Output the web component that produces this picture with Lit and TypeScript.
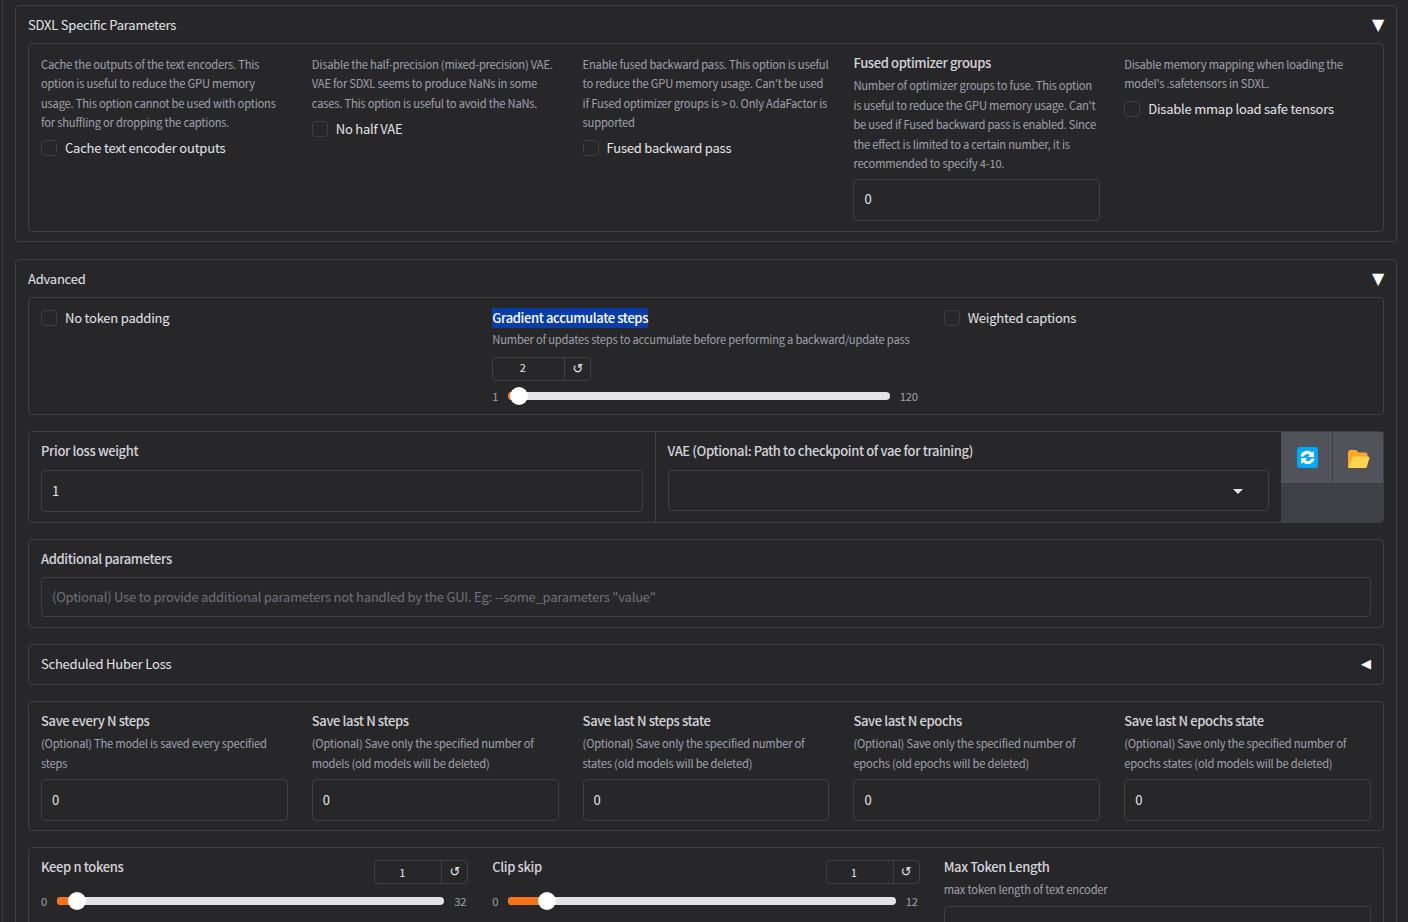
import { LitElement, html, css } from "lit";
import { customElement } from "lit/decorators.js";

const syncArrow = "M3.5 9.5C4 6 7 3.800 10.300 3.800c1.800 0 3.400.7 4.600 1.900L16.800 4v6h-6l2-2c-.6-.7-1.500-1.100-2.500-1.100-1.700 0-3 1-3.500 2.600z";

const syncIcon = html`<svg width="21" height="21" viewBox="0 0 21 21">
  <rect width="21" height="21" rx="3" fill="#03a9f4"></rect>
  <path d=${syncArrow} fill="#fff"></path>
  <path d=${syncArrow} fill="#fff" transform="rotate(180 10.500 10.500)"></path>
</svg>`;

const folderIcon = html`<svg width="23" height="20" viewBox="0 0 23 20">
  <path d="M1 3.5C1 2.1 2 1 3.4 1h5c.7 0 1.3.3 1.7.8L11.500 3.500h7c1.200 0 2 .9 2 2V8H5.500L2 19H1z" fill="#ffa726"></path>
  <path d="M5.300 7.500H21c1 0 1.700.9 1.400 1.800l-2.500 8.500c-.3.800-1 1.200-1.800 1.200H1.500z" fill="#ffd54f"></path>
</svg>`;

@customElement("app-root")
export class AppRoot extends LitElement {
  static styles = css`
    :host {
      display: block;
      height: 922px;
      overflow: hidden;
      background: #27272a;
      color: #e4e4e7;
      font-family: "Noto Sans CJK SC", "Noto Sans", sans-serif;
      font-size: 13px;
      letter-spacing: -0.22px;
    }
    .page {
      margin-left: 2px;
      border-left: 1px solid #3f3f46;
      padding: 5px 11px 0 12px;
      display: flex;
      flex-direction: column;
      gap: 17px;
      min-height: 922px;
      box-sizing: border-box;
    }
    .accordion {
      border: 1px solid #3f3f46;
      border-radius: 4px;
      padding: 0 12px 9px;
      display: flex;
      flex-direction: column;
      gap: 16px;
    }
    .acc-head {
      display: flex;
      justify-content: space-between;
      align-items: center;
      height: 37px;
      margin-bottom: -16px;
      line-height: 20px;
      color: #e4e4e7;
    }
    .tri {
      font-family: "DejaVu Sans", sans-serif;
      font-size: 16px;
      line-height: 20px;
      color: #fff;
      width: 12px;
      display: flex;
      justify-content: center;
    }
    .tri.small {
      font-size: 13px;
      width: 10px;
      margin-right: 8px;
    }
    .block {
      border: 1px solid #3f3f46;
      border-radius: 4px;
      padding: 10px 12px;
    }
    .sdxl {
      height: 189px;
      box-sizing: border-box;
      padding-top: 10.700px;
    }
    .cols5 {
      display: grid;
      grid-template-columns: repeat(5, 1fr);
      column-gap: 24px;
    }
    .cols3 {
      display: grid;
      grid-template-columns: repeat(3, 1fr);
      column-gap: 24px;
    }
    .desc {
      font-size: 11.2px;
      letter-spacing: -0.22px;
      line-height: 19.5px;
      color: #a1a1aa;
    }
    .lab {
      line-height: 20px;
      font-weight: 500;
      letter-spacing: -0.37px;
      color: #d4d4d8;
    }
    .check {
      display: flex;
      align-items: center;
      gap: 8px;
      height: 20px;
      line-height: 20px;
      color: #e4e4e7;
    }
    .desc + .check {
      margin-top: 5.800px;
    }
    .box {
      width: 14px;
      height: 14px;
      border: 1px solid #3f3f46;
      border-radius: 4px;
      flex: none;
    }
    .input {
      display: flex;
      align-items: center;
      justify-content: space-between;
      box-sizing: border-box;
      height: 42px;
      padding: 0 10px 2px;
      border: 1px solid #3f3f46;
      border-radius: 4px;
      color: #e4e4e7;
    }
    .input.ph {
      color: #71717a;
      height: 40px;
      padding-bottom: 1px;
    }
    .input.select {
      height: 41px;
      padding-bottom: 0;
    }
    .arrow {
      width: 0;
      height: 0;
      border-left: 5px solid transparent;
      border-right: 5px solid transparent;
      border-top: 5px solid #e4e4e7;
      margin: 1px 15px 0 0;
    }
    .fused {
      margin-top: -1.700px;
    }
    .fused .desc {
      margin-top: 3px;
    }
    .fused .input {
      margin-top: 5px;
    }
    .selected {
      background: #0b3da8;
      color: #fff;
      display: inline-block;
      vertical-align: top;
    }
    .num {
      display: inline-flex;
      box-sizing: border-box;
      height: 24px;
      border: 1px solid #3f3f46;
      border-radius: 4px;
      font-size: 11.2px;
      line-height: 22px;
      color: #e4e4e7;
    }
    .num .val {
      flex: 1;
      text-align: center;
      padding-right: 12px;
    }
    .num .reset {
      flex: none;
      width: 25px;
      border-left: 1px solid #3f3f46;
      text-align: center;
      font-family: "DejaVu Sans", sans-serif;
      font-size: 13px;
    }
    .slider {
      display: flex;
      align-items: center;
      font-size: 11.2px;
      line-height: 18px;
      color: #a1a1aa;
    }
    .slider .min {
      width: 16px;
      flex: none;
    }
    .slider .max {
      flex: none;
      padding: 0 2px 0 10px;
    }
    .track {
      flex: 1;
      height: 8px;
      border-radius: 4px;
      background: #e4e4e7;
      position: relative;
    }
    .fill {
      position: absolute;
      left: 0;
      top: 0;
      height: 8px;
      border-radius: 4px 0 0 4px;
      background: #f97316;
    }
    .thumb {
      position: absolute;
      top: -5px;
      width: 18px;
      height: 18px;
      margin-left: -9px;
      border-radius: 50%;
      background: #fff;
    }
    .grad .desc {
      margin-top: 2px;
    }
    .grad .num {
      margin-top: 7.500px;
      display: flex;
    }
    .grad .val {
      line-height: 19px;
    }
    .grad .slider {
      margin-top: 6px;
    }
    .adv {
      padding: 10px 12px 9px;
    }
    .row {
      display: flex;
      border: 1px solid #3f3f46;
      border-radius: 4px;
      height: 92px;
      box-sizing: border-box;
    }
    .cell {
      flex: 1;
      min-width: 0;
      padding: 9px 12px 0;
      display: flex;
      flex-direction: column;
      gap: 9px;
    }
    .cell + .cell {
      border-left: 1px solid #3f3f46;
    }
    .side {
      flex: none;
      width: 102px;
      background: #3f3f46;
      display: flex;
      gap: 1px;
      align-items: flex-start;
      border-radius: 0 4px 4px 0;
    }
    .side button {
      flex: 1;
      height: 51px;
      background: #52525b;
      border: none;
      padding: 0 0 0 1px;
      display: flex;
      align-items: center;
      justify-content: center;
    }
    .side button + button {
      padding: 3px 0 0;
    }
    .extra {
      padding: 9px 12px 10px;
      display: flex;
      flex-direction: column;
      gap: 8px;
    }
    .huber {
      display: flex;
      justify-content: space-between;
      align-items: center;
      box-sizing: border-box;
      border: 1px solid #3f3f46;
      border-radius: 4px;
      height: 41px;
      padding: 0 4px 2px 12px;
    }
    .saves {
      padding: 9px 12px;
    }
    .save .desc {
      margin-top: 3px;
    }
    .save .input {
      margin-top: 6px;
    }
    .tok {
      padding: 9px 12px;
    }
    .tok-head {
      display: flex;
      justify-content: space-between;
      align-items: flex-start;
    }
    .tok-head .num {
      margin-top: 3px;
    }
    .tok .slider {
      margin-top: 8px;
    }
    .tok .desc {
      margin-top: 3px;
    }
    .tok .input {
      margin-top: 6.500px;
    }
  `;

  private num(value: string, width: number) {
    return html`<div class="num" style="width:${width}px">
      <div class="val">${value}</div>
      <div class="reset">↺</div>
    </div>`;
  }

  private slider(min: string, max: string, pct: number) {
    return html`<div class="slider">
      <span class="min">${min}</span>
      <div class="track">
        <div class="fill" style="width:${pct}%"></div>
        <div class="thumb" style="left:${pct}%"></div>
      </div>
      <span class="max">${max}</span>
    </div>`;
  }

  private saveCol(label: string, desc: string) {
    return html`<div class="save">
      <div class="lab">${label}</div>
      <div class="desc">${desc}</div>
      <div class="input">0</div>
    </div>`;
  }

  render() {
    return html`<div class="page">
      <section class="accordion">
        <div class="acc-head">SDXL Specific Parameters <span class="tri">▼</span></div>
        <div class="block cols5 sdxl">
          <div>
            <div class="desc">Cache the outputs of the text encoders. This option is useful to reduce the GPU memory usage. This option cannot be used with options for shuffling or dropping the captions.</div>
            <div class="check"><span class="box"></span>Cache text encoder outputs</div>
          </div>
          <div>
            <div class="desc">Disable the half-precision (mixed-precision) VAE. VAE for SDXL seems to produce NaNs in some cases. This option is useful to avoid the NaNs.</div>
            <div class="check"><span class="box"></span>No half VAE</div>
          </div>
          <div>
            <div class="desc">Enable fused backward pass. This option is useful to reduce the GPU memory usage. Can't be used if Fused optimizer groups is &gt; 0. Only AdaFactor is supported</div>
            <div class="check"><span class="box"></span>Fused backward pass</div>
          </div>
          <div class="fused">
            <div class="lab">Fused optimizer groups</div>
            <div class="desc">Number of optimizer groups to fuse. This option is useful to reduce the GPU memory usage. Can't be used if Fused backward pass is enabled. Since the effect is limited to a certain number, it is recommended to specify 4-10.</div>
            <div class="input">0</div>
          </div>
          <div>
            <div class="desc">Disable memory mapping when loading the model's .safetensors in SDXL.</div>
            <div class="check"><span class="box"></span>Disable mmap load safe tensors</div>
          </div>
        </div>
      </section>

      <section class="accordion">
        <div class="acc-head">Advanced <span class="tri">▼</span></div>
        <div class="block adv cols3">
          <div class="check"><span class="box"></span>No token padding</div>
          <div class="grad">
            <span class="lab selected">Gradient accumulate steps</span>
            <div class="desc">Number of updates steps to accumulate before performing a backward/update pass</div>
            ${this.num("2", 99)}
            ${this.slider("1", "120", 2.9)}
          </div>
          <div class="check"><span class="box"></span>Weighted captions</div>
        </div>

        <div class="row">
          <div class="cell">
            <div class="lab">Prior loss weight</div>
            <div class="input">1</div>
          </div>
          <div class="cell">
            <div class="lab">VAE (Optional: Path to checkpoint of vae for training)</div>
            <div class="input select"><span></span><span class="arrow"></span></div>
          </div>
          <div class="side">
            <button>${syncIcon}</button>
            <button>${folderIcon}</button>
          </div>
        </div>

        <div class="block extra">
          <div class="lab">Additional parameters</div>
          <div class="input ph">(Optional) Use to provide additional parameters not handled by the GUI. Eg: --some_parameters "value"</div>
        </div>

        <div class="huber">Scheduled Huber Loss <span class="tri small">◀</span></div>

        <div class="block cols5 saves">
          ${this.saveCol("Save every N steps", "(Optional) The model is saved every specified steps")}
          ${this.saveCol("Save last N steps", "(Optional) Save only the specified number of models (old models will be deleted)")}
          ${this.saveCol("Save last N steps state", "(Optional) Save only the specified number of states (old models will be deleted)")}
          ${this.saveCol("Save last N epochs", "(Optional) Save only the specified number of epochs (old epochs will be deleted)")}
          ${this.saveCol("Save last N epochs state", "(Optional) Save only the specified number of epochs states (old models will be deleted)")}
        </div>

        <div class="block cols3 tok">
          <div>
            <div class="tok-head"><div class="lab">Keep n tokens</div>${this.num("1", 94)}</div>
            ${this.slider("0", "32", 5.2)}
          </div>
          <div>
            <div class="tok-head"><div class="lab">Clip skip</div>${this.num("1", 94)}</div>
            ${this.slider("0", "12", 10)}
          </div>
          <div>
            <div class="lab">Max Token Length</div>
            <div class="desc">max token length of text encoder</div>
            <div class="input"></div>
          </div>
        </div>
      </section>
    </div>`;
  }
}
